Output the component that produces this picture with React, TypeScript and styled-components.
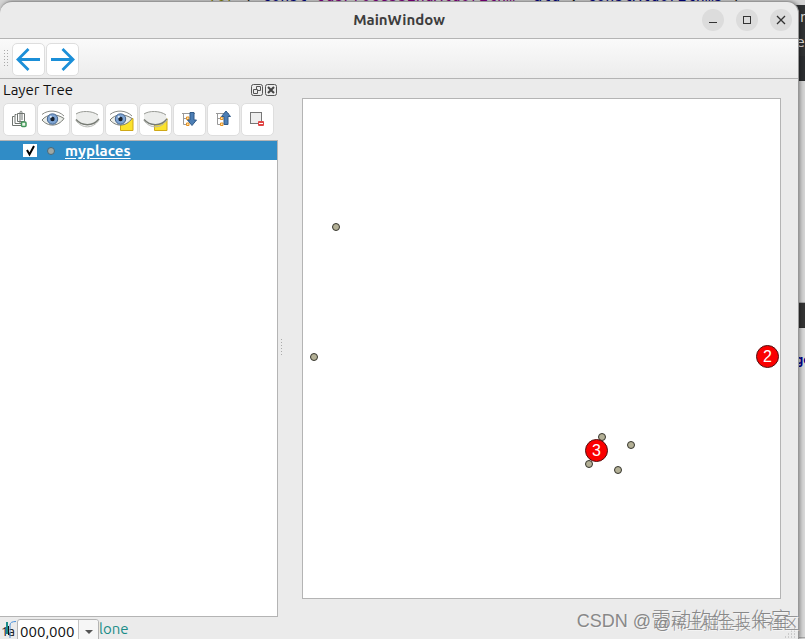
import React from 'react';
import styled, { createGlobalStyle } from 'styled-components';

const UI = '"Ubuntu", "Noto Sans", "Open Sans", sans-serif';

const GlobalStyle = createGlobalStyle`
  *, *::before, *::after { box-sizing: border-box; }
  body { margin: 0; background: #d4d4d4; overflow: hidden; }
  button, input { font: inherit; color: inherit; }
`;

const Desktop = styled.div`
  position: relative;
  display: flex;
  height: 100vh;
  min-height: 400px;
  padding: 1px 6px 0 0;
  overflow: hidden;
  background: #d4d4d4;
  font: 15px/20px ${UI};
  color: #111;
`;

const CodeLine = styled.div`
  position: absolute;
  top: -13px;
  left: 208px;
  font: 15px/18px "DejaVu Sans Mono", monospace;
  white-space: pre;
  color: #111;
  span { color: #808000; }
  em { color: #800080; font-style: normal; }
  b { color: #000080; font-weight: normal; }
`;

const EditorEdge = styled.div`
  position: absolute;
  inset: 5px 0 0 auto;
  width: 9px;
  display: flex;
  flex-direction: column;
  overflow: hidden;
`;

const EdgeBlock = styled.div<{ $h: number; $bg: string }>`
  flex: 0 0 ${p => p.$h}px;
  background: ${p => p.$bg};
  color: #ddd;
  font: 14px/25px "DejaVu Sans", sans-serif;
  border-bottom: 1px solid #2224;
  overflow: hidden;
  white-space: nowrap;
`;

const EdgeCode = styled.div`
  padding-top: 24px;
  font: bold 12px/16px "DejaVu Sans Mono", monospace;
  color: #00008b;
`;

const Window = styled.div`
  position: relative;
  flex: 1;
  min-width: 0;
  display: flex;
  flex-direction: column;
  background: #ebebeb;
  border: 1px solid #979797;
  border-width: 1px 1px 0 0;
  border-radius: 12px 12px 0 0;
  box-shadow: 1px 0 4px #0006;
`;

const TitleBar = styled.header`
  display: grid;
  grid-template-columns: 1fr auto 1fr;
  align-items: center;
  height: 37px;
  border-bottom: 1px solid #b4b4b4;
`;

const Title = styled.h1`
  grid-column: 2;
  margin: 0;
  font: bold 15px/20px ${UI};
  color: #3d3d3d;
`;

const WindowButtons = styled.div`
  display: flex;
  justify-content: flex-end;
  gap: 12px;
  padding-right: 6px;
`;

const RoundButton = styled.button`
  display: grid;
  place-items: center;
  width: 22px;
  height: 22px;
  padding: 0;
  border: 0;
  border-radius: 50%;
  background: #dcdcdc;
`;

const ToolBar = styled.div`
  display: flex;
  align-items: center;
  height: 40px;
  gap: 1px;
  padding: 1px 0 0 4px;
  background: linear-gradient(#fafafa, #ececec);
  border-bottom: 1px solid #b4b4b4;
`;

const ToolButton = styled.button`
  display: grid;
  place-items: center;
  width: 33px;
  height: 33px;
  padding: 0;
  background: #fff;
  border: 1px solid #dedede;
  border-radius: 5px;
`;

const Grip = styled.svg`
  margin-right: 1px;
`;

const Body = styled.div`
  flex: 1;
  min-height: 0;
  display: flex;
`;

const Dock = styled.section`
  flex: 0 0 278px;
  display: flex;
  flex-direction: column;
`;

const DockHeader = styled.div`
  display: flex;
  align-items: center;
  height: 22px;
  gap: 2px;
  padding: 0 1px 0 3px;
`;

const DockTitle = styled.h2`
  flex: 1;
  margin: 0;
  font: 15px/20px ${UI};
`;

const DockButton = styled.button`
  display: grid;
  place-items: center;
  width: 12px;
  height: 12px;
  padding: 0;
  border: 0;
  background: none;
`;

const DockTools = styled.div`
  display: flex;
  gap: 1px;
  padding: 2px 3px 4px;
`;

const Tree = styled.div`
  flex: 1;
  background: #fff;
  border: 1px solid #b4b4b4;
  border-left: 0;
`;

const TreeRow = styled.label`
  display: flex;
  align-items: center;
  height: 19px;
  padding-left: 23px;
  background: #308cc6;
  color: #fff;
  font-weight: bold;
`;

const Check = styled.input`
  appearance: none;
  width: 14px;
  height: 13px;
  margin: 0;
  background: #fff;
  &:checked {
    background: #fff url("data:image/svg+xml,%3Csvg xmlns='http://www.w3.org/2000/svg' viewBox='0 0 13 13'%3E%3Cpath d='M3 6 5.500 10.500 10 2' fill='none' stroke='%23000' stroke-width='2'/%3E%3C/svg%3E") center no-repeat;
  }
`;

const LayerDot = styled.span`
  width: 8px;
  height: 8px;
  margin: 0 10px;
  border: 1px solid #486878;
  border-radius: 50%;
  background: #a0a8a4;
`;

const LayerName = styled.span`
  text-decoration: underline;
  text-underline-offset: 2px;
`;

const Splitter = styled.div`
  flex: 0 0 7px;
  display: grid;
  place-items: center;
`;

const CanvasArea = styled.main`
  flex: 1;
  display: flex;
  padding: 19px 17px 18px;
`;

const Canvas = styled.div`
  position: relative;
  flex: 1;
  background: #fff;
  border: 1px solid #b4b4b4;
`;

const Place = styled.span<{ $x: number; $y: number }>`
  position: absolute;
  left: ${p => p.$x}px;
  top: ${p => p.$y}px;
  width: 8px;
  height: 8px;
  border: 1px solid #35352d;
  border-radius: 50%;
  background: #b3b096;
`;

const Cluster = styled.span<{ $x: number; $y: number }>`
  position: absolute;
  left: ${p => p.$x}px;
  top: ${p => p.$y}px;
  width: 23px;
  height: 23px;
  border: 1px solid #501010;
  border-radius: 50%;
  background: #fa0000;
  color: #fff;
  font: 16px/22px "Liberation Sans", sans-serif;
  text-align: center;
`;

const StatusBar = styled.footer`
  display: flex;
  height: 22px;
  overflow: hidden;
`;

const Clipped = styled.div`
  position: relative;
  width: 17px;
  height: 22px;
  padding-left: 1px;
  white-space: nowrap;
  font-size: 13px;
  line-height: 29px;
  svg { position: absolute; left: 5px; top: 3px; }
`;

const Scale = styled.div`
  display: flex;
  width: 82px;
  height: 26px;
  margin-top: 2px;
  background: #fff;
  border: 1px solid #b4b4b4;
  border-radius: 3px;
`;

const ScaleInput = styled.input`
  width: 61px;
  min-width: 0;
  height: 23px;
  padding: 0 0 0 2px;
  border: 0;
  border-right: 1px solid #c4c4c4;
  background: none;
  outline: none;
`;

const ScaleArrow = styled.button`
  flex: 1;
  display: grid;
  place-items: center;
  padding: 0;
  border: 0;
  background: #f6f6f6;
  border-radius: 0 3px 3px 0;
`;

const Status = styled.span`
  line-height: 24px;
  color: #1a8c88;
`;

const Watermark = styled.div<{ $right: number; $size: number; $top: number }>`
  position: absolute;
  right: ${p => p.$right}px;
  top: ${p => p.$top}px;
  font: 300 ${p => p.$size}px/24px "Liberation Sans", "Noto Sans CJK SC", sans-serif;
  color: #888;
  text-shadow: 1px 1px 0 #fff8;
  white-space: nowrap;
  pointer-events: none;
`;

const Latin = styled.span`
  font-size: 18px;
`;

const SizeGrip = styled.svg`
  margin: 10px 1px 0 auto;
`;

const Dots = ({ cols, rows, step }: { cols: number; rows: number; step: number }) => (
  <Grip width={cols * step} height={rows * 3} aria-hidden="true">
    {Array.from({ length: cols * rows }, (_, i) => (
      <rect key={i} x={(i % cols) * step} y={Math.floor(i / cols) * 3} width="1" height="1" fill="#aaa" />
    ))}
  </Grip>
);

const Arrow = ({ flip }: { flip?: boolean }) => (
  <svg width="25" height="25" viewBox="0 0 25 25" fill="none" stroke="#1b8fd8" strokeWidth="2.800">
    <path d={flip ? 'M1 12.500H23M12.500 2 23 12.500 12.500 23' : 'M24 12.500H2M12.500 2 2 12.500 12.500 23'} />
  </svg>
);

const Eye = ({ open, tag }: { open?: boolean; tag?: boolean }) => (
  <svg width="25" height="25" viewBox="0 0 25 25" fill="none">
    {tag && <path d="M11.500 11.500H24V23.500H11.500Z" fill="#fbe22c" stroke="#cfa817" />}
    {open ? (
      <>
        <path d="M1 13C6 7 15 6 23 11.500 17 20 7 20 1 13Z" fill="#eceeea" stroke="#777b74" />
        <circle cx="11.500" cy="12" r="5.200" fill="#7fa5d4" stroke="#45658f" />
        <circle cx="11.500" cy="12" r="2.200" fill="#17202c" />
        <circle cx="9.800" cy="9.800" r="1.100" fill="#dce9f5" />
        <path d="M1 7.500C7 2.500 17 3 23 9" stroke="#898b86" />
      </>
    ) : (
      <>
        <path d="M1 6.500C6 3.500 18 3 22.500 7L24 12.500C18 20 7 20 1 13.500Z" fill="#ecedeb" />
        <path d="M1 7C6 3.500 17 3.500 23 8" stroke="#9a9c97" />
        <path d="M1 12.500C7 19.500 18 19.500 24 12" stroke="#777b74" strokeWidth="1.500" />
        <path d="M1 13.500C7 22 18 22 24 13" stroke="#b4b6b1" />
      </>
    )}
  </svg>
);

const AddGroup = () => (
  <svg width="25" height="25" viewBox="0 0 25 25" fill="none" stroke="#6f7470">
    <path d="M7.500 9.500H5.500V18.500H15M9.500 7.500H8V16.500H15M10.500 6.500H17.500V14.500H10.500ZM13 16V6C13 3.500 15 3.500 15 6V13" />
    <rect x="14.500" y="15" width="4.500" height="4.500" rx="1" fill="#eaf6e8" stroke="#43965a" strokeWidth="1.500" />
  </svg>
);

const TreeMove = ({ up }: { up?: boolean }) => (
  <svg width="25" height="25" viewBox="0 0 25 25" fill="none">
    <path d="M5 6.500H18M6.500 7V17.500H9M6.500 11.500H9" stroke="#999" />
    <path d="M9.500 10H12V12.500H9.500ZM9.500 16H12V18.500H9.500Z" fill="#ffe5ad" stroke="#e69222" />
    <path
      d={up ? 'M15 4 19.500 9.500H17V17.500H13V9.500H10.500Z' : 'M13 5.500H17V13H19.500L15 18.500 10.500 13H13Z'}
      fill="#4c7eb5" stroke="#315b89"
    />
  </svg>
);

const RemoveLayer = () => (
  <svg width="25" height="25" viewBox="0 0 25 25">
    <rect x="5.500" y="5.500" width="11" height="11" fill="#eee" stroke="#777" />
    <rect x="13" y="14" width="6" height="5" rx="1" fill="#e04545" />
    <path d="M14 16.500H18" stroke="#fff" />
  </svg>
);

const places = [[29, 124], [7, 254], [295, 334], [324, 342], [282, 361], [311, 367]];
const clusters = [{ n: 3, x: 282, y: 340 }, { n: 2, x: 453, y: 246 }];
const layerTools: [string, React.ReactNode][] = [
  ['Add group', <AddGroup />],
  ['Show all layers', <Eye open />],
  ['Hide all layers', <Eye />],
  ['Show selected layers', <Eye open tag />],
  ['Hide selected layers', <Eye tag />],
  ['Expand all', <TreeMove />],
  ['Collapse all', <TreeMove up />],
  ['Remove layer', <RemoveLayer />],
];

export default function App() {
  return (
    <Desktop>
      <GlobalStyle />
      <CodeLine><span>for</span> ( <b>const</b> <em>QgsProcessingAlgorithm</em> *<b>alg</b> : <b>constAlgorithms</b> )</CodeLine>
      <EditorEdge>
        <EdgeBlock $h={52} $bg="#303234">in<br />e</EdgeBlock>
        <EdgeBlock $h={24} $bg="#2b2d30" />
        <EdgeBlock $h={222} $bg="#d4d4d4" />
        <EdgeBlock $h={25} $bg="#333" />
        <EdgeBlock $h={310} $bg="#d8d8d8"><EdgeCode>ge</EdgeCode></EdgeBlock>
      </EditorEdge>
      <Window>
        <TitleBar>
          <Title>MainWindow</Title>
          <WindowButtons>
            <RoundButton aria-label="Minimize"><svg width="10" height="10"><path d="M1 7.500H9" stroke="#333" /></svg></RoundButton>
            <RoundButton aria-label="Maximize"><svg width="10" height="10"><rect x="1.500" y="1.500" width="7" height="7" fill="none" stroke="#333" /></svg></RoundButton>
            <RoundButton aria-label="Close"><svg width="10" height="10"><path d="M1 1 9 9M9 1 1 9" stroke="#333" strokeWidth="1.300" /></svg></RoundButton>
          </WindowButtons>
        </TitleBar>
        <ToolBar>
          <Dots cols={2} rows={6} step={3} />
          <ToolButton aria-label="Back"><Arrow /></ToolButton>
          <ToolButton aria-label="Forward"><Arrow flip /></ToolButton>
        </ToolBar>
        <Body>
          <Dock>
            <DockHeader>
              <DockTitle>Layer Tree</DockTitle>
              <DockButton aria-label="Float"><svg width="12" height="12" fill="none" stroke="#555"><rect x="0.500" y="0.500" width="11" height="11" rx="2" /><path d="M5.500 5V2.500H9.500V6.500H7M2.500 5.500H6.500V9.500H2.500Z" /></svg></DockButton>
              <DockButton aria-label="Close panel"><svg width="12" height="12" fill="none" stroke="#555"><rect x="0.500" y="0.500" width="11" height="11" rx="2" /><path d="M3 3 9 9M9 3 3 9" strokeWidth="2" stroke="#444" /></svg></DockButton>
            </DockHeader>
            <DockTools>
              {layerTools.map(([name, icon]) => <ToolButton key={name} aria-label={name}>{icon}</ToolButton>)}
            </DockTools>
            <Tree>
              <TreeRow><Check type="checkbox" defaultChecked /><LayerDot /><LayerName>myplaces</LayerName></TreeRow>
            </Tree>
          </Dock>
          <Splitter><Dots cols={1} rows={6} step={1} /></Splitter>
          <CanvasArea>
            <Canvas>
              {places.map(([x, y]) => <Place key={`${x}-${y}`} $x={x} $y={y} />)}
              {clusters.map(c => <Cluster key={c.n} $x={c.x} $y={c.y}>{c.n}</Cluster>)}
            </Canvas>
          </CanvasArea>
        </Body>
        <StatusBar>
          <Clipped>
            1a
            <svg width="12" height="19" fill="none" aria-hidden="true">
              <path d="M2 2V14" stroke="#1a8c88" strokeWidth="2" />
              <path d="M5 18V5Q5 1.500 11 1.500" stroke="#4a90d9" />
              <path d="M3.500 6V15" stroke="#111" />
            </svg>
          </Clipped>
          <Scale>
            <ScaleInput aria-label="Scale" defaultValue="000,000" />
            <ScaleArrow aria-label="Choose scale"><svg width="8" height="4"><path d="M0 0H8L4 4Z" fill="#555" /></svg></ScaleArrow>
          </Scale>
          <Status>lone</Status>
          <SizeGrip width="12" height="12" aria-hidden="true"><path d="M9 1h1M6 4h1M9 4h1M3 7h1M6 7h1M9 7h1M0 10h1M3 10h1M6 10h1M9 10h1" stroke="#aaa" /></SizeGrip>
        </StatusBar>
      </Window>
      <Watermark $right={14} $top={608} $size={20}><Latin>CSDN @</Latin>雷动软件工作室</Watermark>
      <Watermark $right={6} $top={612} $size={16}>@稀土掘金技术社区</Watermark>
    </Desktop>
  );
}
